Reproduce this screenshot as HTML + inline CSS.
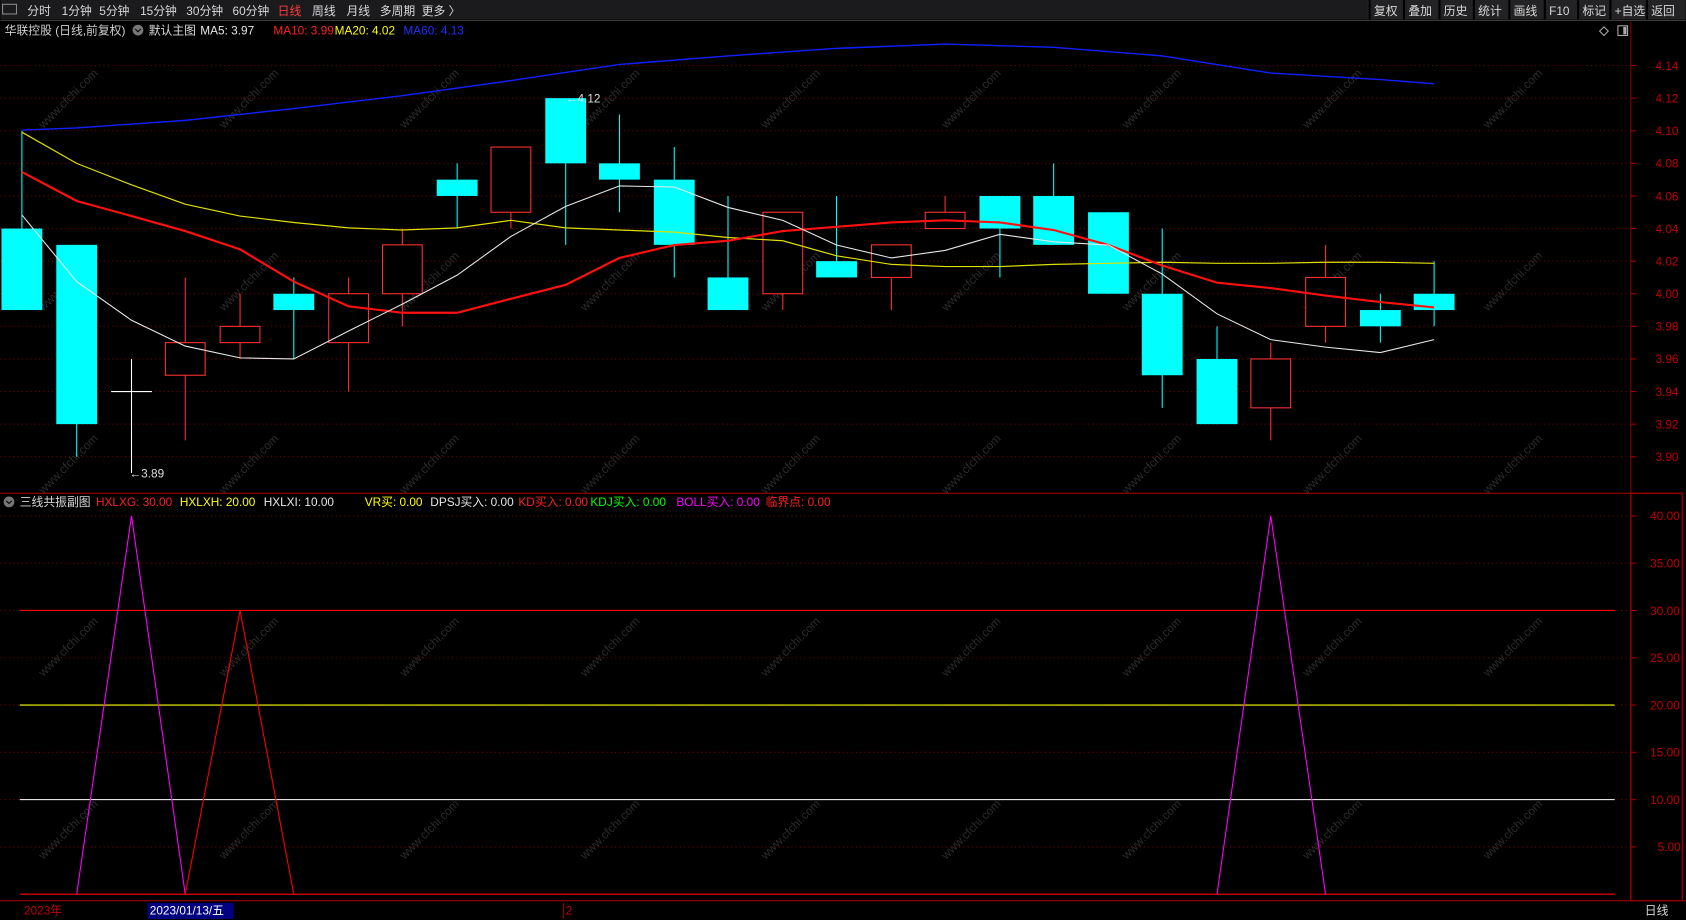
<!DOCTYPE html>
<html><head><meta charset="utf-8"><style>
html,body{margin:0;padding:0;background:#000;width:1686px;height:920px;overflow:hidden}
svg{display:block}
text{font-family:"Liberation Sans","Noto Sans CJK SC",sans-serif;font-size:11px}
</style></head><body>
<svg id="s" width="1686" height="920" viewBox="0 0 1568 856" xmlns="http://www.w3.org/2000/svg">
<rect width="1568" height="856" fill="#000"/>
<rect width="1568" height="18" fill="#1b1b1d"/>
<line x1="0" y1="19" x2="1568" y2="19" stroke="#3a3a3a"/>
<g id="wm"></g>
<g id="grid"></g>
<g id="tb" fill="#d8d8d8">
<rect x="2" y="4" width="13" height="9" fill="none" stroke="#888"/>
<text x="25" y="14">分时</text><text x="57" y="14">1分钟</text><text x="92" y="14">5分钟</text><text x="130" y="14">15分钟</text><text x="173" y="14">30分钟</text><text x="216" y="14">60分钟</text><text x="258" y="14" fill="#ff3b3b">日线</text><text x="290" y="14">周线</text><text x="322" y="14">月线</text><text x="353" y="14">多周期</text><text x="392" y="14">更多 〉</text>
</g>
<rect x="1272" y="0" width="296" height="18" fill="#232325"/>
<g id="rb"></g>
<text x="4" y="32" fill="#cfcfcf">华联控股 (日线,前复权)</text>
<circle cx="128" cy="28" r="5" fill="#777"/><path d="M125.5 27 L128 29.5 L130.5 27" stroke="#000" fill="none"/>
<text x="138" y="32" fill="#d8d8d8">默认主图</text>
<text x="186" y="32" fill="#e6e6e6">MA5: 3.97</text>
<text x="254" y="32" fill="#ff2020">MA10: 3.99</text>
<text x="311" y="32" fill="#ffff00">MA20: 4.02</text>
<text x="375" y="32" fill="#2030ff">MA60: 4.13</text>
<path d="M1492 25 L1496 29 L1492 33 L1488 29Z" fill="none" stroke="#aaa"/>
<rect x="1505" y="24" width="9" height="9" fill="none" stroke="#aaa"/><rect x="1510" y="25" width="3" height="7" fill="#aaa"/>
<line x1="1517" y1="20" x2="1517" y2="838" stroke="#8b0000"/>
<line x1="0" y1="459" x2="1517" y2="459" stroke="#a00000"/>
<line x1="0" y1="838" x2="1568" y2="838" stroke="#a00000"/>
<rect x="1517" y="459" width="48" height="379" fill="none" stroke="#8b0000" stroke-width="1.5"/>
<g id="c"></g>
<g id="sub"></g>
<circle cx="8" cy="467" r="5" fill="#777"/><path d="M5.5 466 L8 468.5 L10.5 466" stroke="#000" fill="none"/>
<text x="18" y="471" fill="#d8d8d8">三线共振副图</text>
<text x="89" y="471" fill="#ff2020">HXLXG: 30.00</text>
<text x="167" y="471" fill="#ffff00">HXLXH: 20.00</text>
<text x="245" y="471" fill="#e6e6e6">HXLXI: 10.00</text>
<text x="339" y="471" fill="#ffff00">VR买: 0.00</text>
<text x="400" y="471" fill="#e6e6e6">DPSJ买入: 0.00</text>
<text x="482" y="471" fill="#ff2020">KD买入: 0.00</text>
<text x="549" y="471" fill="#00ff00">KDJ买入: 0.00</text>
<text x="629" y="471" fill="#ff00ff">BOLL买入: 0.00</text>
<text x="712" y="471" fill="#ff2020">临界点: 0.00</text>
<text x="22" y="851" fill="#c00000">2023年</text>
<rect x="137" y="840" width="80" height="15" fill="#000080"/>
<text x="139" y="851" fill="#fff">2023/01/13/五</text>
<line x1="524" y1="840" x2="524" y2="855" stroke="#a00000"/>
<text x="526" y="851" fill="#c00000">2</text>
<text x="1530" y="851" fill="#d8d8d8">日线</text>
</svg>
<script>
var NS="http://www.w3.org/2000/svg";
function el(p,t,a,txt){var e=document.createElementNS(NS,t);for(var k in a)e.setAttribute(k,a[k]);if(txt)e.textContent=txt;document.getElementById(p).appendChild(e);return e;}
for(var i=0;i<9;i++)for(var j=0;j<5;j++){var x=40+i*168,y=120+j*170;el('wm','text',{x:x,y:y,transform:'rotate(-45 '+x+' '+y+')','font-size':'18',fill:'#2c2c2c'},'www.cfchi.com');}
function py(p){return 61+(4.14-p)/0.02*30.33;}
for(var p=4.14;p>3.885;p-=0.02){var y=py(p);el('grid','line',{x1:0,y1:y,x2:1517,y2:y,stroke:'#7a0000','stroke-dasharray':'1 3'});el('grid','line',{x1:1517,y1:y,x2:1522,y2:y,stroke:'#a00000'});el('grid','text',{x:1540,y:y+4,fill:'#c00000'},p.toFixed(2));}
function sy(v){return 480+(40-v)*8.8;}
for(var v=40;v>=5;v-=5){var y=sy(v);el('grid','line',{x1:0,y1:y,x2:1517,y2:y,stroke:'#7a0000','stroke-dasharray':'1 3'});el('grid','line',{x1:1517,y1:y,x2:1522,y2:y,stroke:'#a00000'});el('grid','text',{x:v>=10?1535:1542,y:y+4,fill:'#c00000'},v.toFixed(2));}
var rb=[['复权',1278],['叠加',1310],['历史',1343],['统计',1375],['画线',1408],['F10',1441],['标记',1472],['+自选',1502],['返回',1536]];
rb.forEach(function(r){el('rb','line',{x1:r[1]-4,y1:0,x2:r[1]-4,y2:18,stroke:'#000','stroke-width':2});el('rb','text',{x:r[1],y:14,fill:'#d8d8d8'},r[0]);});
var C=[[20,4.04,3.99,4.10,3.99],[71,4.03,3.92,4.03,3.90],[172,3.95,3.97,4.01,3.91],[223,3.97,3.98,4.00,3.96],[273,4.00,3.99,4.01,3.96],[324,3.97,4.00,4.01,3.94],[374,4.00,4.03,4.04,3.98],[425,4.07,4.06,4.08,4.04],[475,4.05,4.09,4.09,4.04],[526,4.12,4.08,4.12,4.03],[576,4.08,4.07,4.11,4.05],[627,4.07,4.03,4.09,4.01],[677,4.01,3.99,4.06,3.99],[728,4.00,4.05,4.05,3.99],[778,4.02,4.01,4.06,4.01],[829,4.01,4.03,4.03,3.99],[879,4.04,4.05,4.06,4.04],[930,4.06,4.04,4.06,4.01],[980,4.06,4.03,4.08,4.03],[1031,4.05,4.00,4.05,4.00],[1081,4.00,3.95,4.04,3.93],[1132,3.96,3.92,3.98,3.92],[1182,3.93,3.96,3.97,3.91],[1233,3.98,4.01,4.03,3.97],[1284,3.99,3.98,4.00,3.97],[1334,4.00,3.99,4.02,3.98]];
C.forEach(function(c){var x=c[0],up=c[2]>c[1],col=up?'#ff3030':'#00ffff';var t=py(Math.max(c[1],c[2])),b=py(Math.min(c[1],c[2]));
el('c','line',{x1:x,y1:py(c[3]),x2:x,y2:py(c[4]),stroke:col});
if(up)el('c','rect',{x:x-18.5,y:t,width:37,height:b-t,fill:'#000',stroke:col});else el('c','rect',{x:x-19,y:t,width:38,height:Math.max(b-t,1),fill:col});});
el('c','line',{x1:122,y1:py(3.96),x2:122,y2:py(3.89),stroke:'#fff'});el('c','line',{x1:103,y1:py(3.94),x2:141,y2:py(3.94),stroke:'#fff'});
el('c','text',{x:120,y:py(3.89)+4,fill:'#ddd'},'←3.89');
el('c','text',{x:526,y:py(4.12)+4,fill:'#ddd'},'←4.12');
function pl(pts,col,w){el('c','polyline',{points:pts,fill:'none',stroke:col,'stroke-width':w});}
pl("20,121 71,119 172,112 273,101 374,89 475,75 576,60 677,52 778,45 879,41 980,44 1081,52 1182,68 1284,74 1334,78",'#1020ff',1.3);
pl("20,123 71,152 122,172 172,190 223,201 273,207 324,212 374,214 425,212 475,205 526,212 576,214 627,216 677,221 728,224 778,238 829,246 879,248 930,248 980,246 1031,245 1081,244 1132,245 1182,245 1233,244 1284,244 1334,245",'#e0e000',1.1);
pl("20,160 71,187 122,201 172,215 223,232 273,262 324,285 374,291 425,291 475,278 526,265 576,240 627,228 677,224 728,215 778,211 829,207 879,205 930,207 980,214 1031,228 1081,247 1132,263 1182,268 1233,275 1284,281 1334,286",'#ff1010',2);
pl("20,200 71,262 122,298 172,322 223,333 273,334 324,308 374,283 425,256 475,220 526,192 576,173 627,174 677,193 728,205 778,228 829,240 879,233 930,218 980,225 1031,228 1081,255 1132,292 1182,316 1233,323 1284,328 1334,316",'#e8e8e8',1);
function sl(y,col){el('sub','line',{x1:18,y1:y,x2:1502,y2:y,stroke:col});}
sl(sy(30),'#ff0000');sl(sy(20),'#ffff00');sl(sy(10),'#ffffff');sl(832,'#ff0000');
el('sub','polyline',{points:"71,832 122,480 172,832",fill:'none',stroke:'#ff00ff'});
el('sub','polyline',{points:"172,832 223,568 273,832",fill:'none',stroke:'#ff0000'});
el('sub','polyline',{points:"1132,832 1182,480 1233,832",fill:'none',stroke:'#ff00ff'});
</script>
</body></html>
